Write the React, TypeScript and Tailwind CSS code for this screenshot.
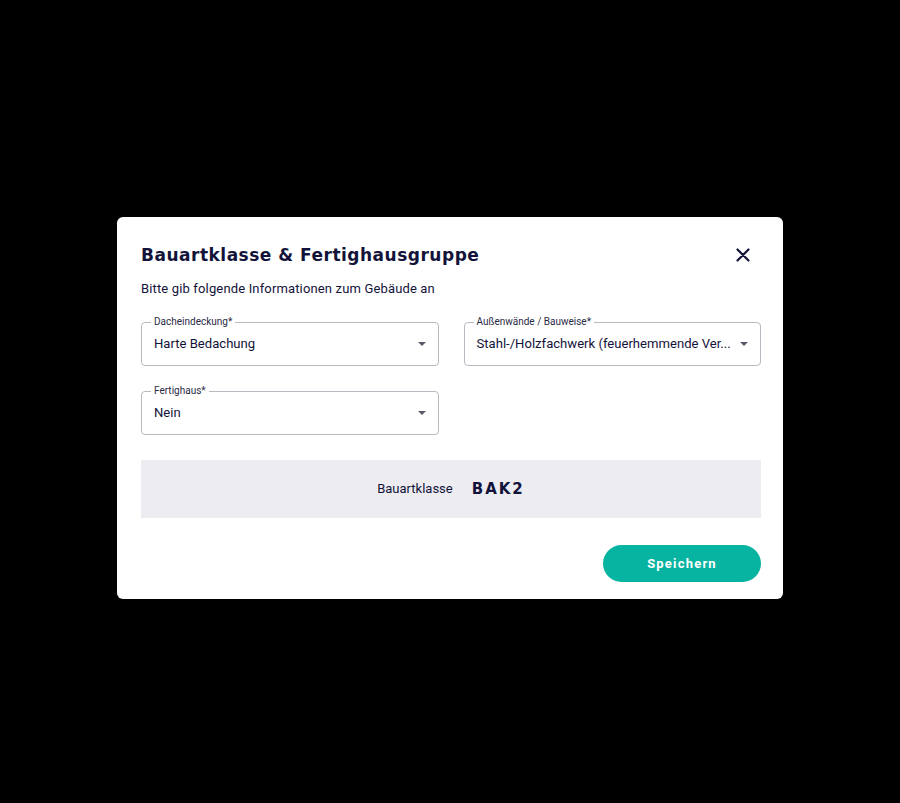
import React from "react";

const navy = "text-[#13133a]";

function SelectField({ label, value }: { label: string; value: string }) {
  return (
    <div className="relative flex h-[44px] items-center rounded-[4px] border border-[#b9b9c2] pl-[12px] pr-[12px]">
      <span className="absolute -top-[7px] left-[9px] bg-white px-[3px] text-[10px] leading-[12px] text-[#2a2a45] font-['Roboto',sans-serif]">
        {label}
      </span>
      <span
        className={`min-w-0 flex-1 whitespace-nowrap text-[13.1px] ${navy} font-['Roboto',sans-serif]`}
      >
        {value}
      </span>
      <svg width="8" height="4" viewBox="0 0 8 4" className="ml-[4px] shrink-0">
        <path d="M0 0 L8 0 L4 4 Z" fill="#5a5a6a" />
      </svg>
    </div>
  );
}

export default function App() {
  return (
    <div className="flex h-[803px] w-full items-start justify-center bg-black pt-[217px]">
      <div className="w-[666px] rounded-[6px] bg-white pb-[17px] pl-[24px] pr-[22px] pt-[27px]">
        {/* Header */}
        <div className="flex items-center justify-between">
          <h2
            className={`text-[17px] font-bold leading-[22px] tracking-[0.5px] ${navy} font-['DejaVu_Sans',sans-serif]`}
          >
            Bauartklasse &amp; Fertighausgruppe
          </h2>
          <button className="mr-[8px] flex h-[20px] w-[20px] items-center justify-center">
            <svg width="14" height="14" viewBox="0 0 14 14">
              <path
                d="M1.5 1.5 L12.5 12.5 M12.5 1.5 L1.5 12.5"
                stroke="#13133a"
                strokeWidth="2.2"
                strokeLinecap="round"
              />
            </svg>
          </button>
        </div>
        <p
          className={`mt-[15px] text-[13px] leading-[16px] tracking-[0.15px] ${navy} font-['Roboto',sans-serif]`}
        >
          Bitte gib folgende Informationen zum Gebäude an
        </p>

        {/* Fields */}
        <div className="mt-[25px] grid grid-cols-2 gap-x-[25px] gap-y-[25px]">
          <SelectField label="Dacheindeckung*" value="Harte Bedachung" />
          <SelectField
            label="Außenwände / Bauweise*"
            value="Stahl-/Holzfachwerk (feuerhemmende Ver..."
          />
          <SelectField label="Fertighaus*" value="Nein" />
        </div>

        {/* Result */}
        <div className="mt-[25px] flex h-[58px] items-center justify-center gap-[19px] bg-[#ececf1]">
          <span className={`text-[13px] ${navy} font-['Roboto',sans-serif]`}>Bauartklasse</span>
          <span
            className={`text-[15px] font-bold tracking-[2px] ${navy} font-['DejaVu_Sans',sans-serif]`}
          >
            BAK2
          </span>
        </div>

        {/* Footer */}
        <div className="mt-[27px] flex justify-end">
          <button className="h-[37px] w-[158px] rounded-full bg-[#07b3a1] text-[13px] font-bold tracking-[1.2px] text-white font-['Roboto',sans-serif]">
            Speichern
          </button>
        </div>
      </div>
    </div>
  );
}
